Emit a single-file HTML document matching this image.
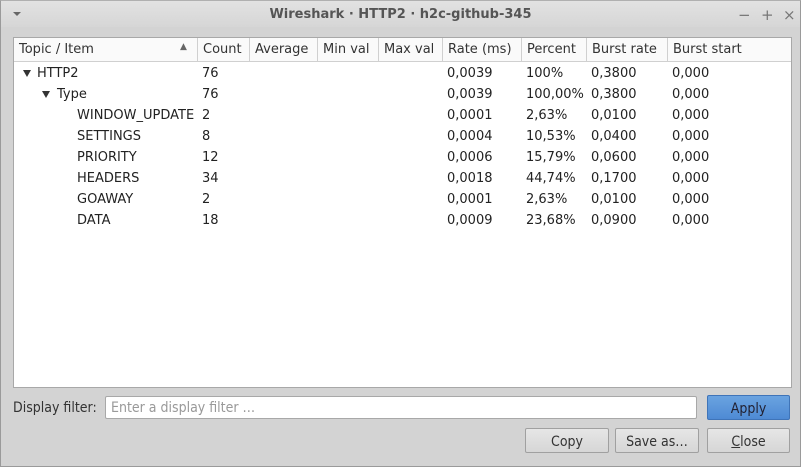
<!DOCTYPE html>
<html><head><meta charset="utf-8">
<style>
*{margin:0;padding:0;box-sizing:border-box}
body{width:801px;height:467px;overflow:hidden;background:#d3d3d3;font-family:"DejaVu Sans","Liberation Sans",sans-serif;font-size:13px;color:#222;position:relative}
.win{position:absolute;left:0;top:0;width:801px;height:467px;border:1px solid #9a9a9a;border-top-color:#b0b0b0}
.title{position:absolute;left:1px;top:1px;width:799px;height:26px;background:linear-gradient(#e2e2e2,#d6d6d6)}
.title .t{position:absolute;left:0;width:100%;top:6px;text-align:center;font-weight:bold;font-size:13px;color:#555}
.tri{position:absolute;left:12px;top:11px;width:0;height:0;border-left:4px solid transparent;border-right:4px solid transparent;border-top:4px solid #666}
.ctl{position:absolute;top:5px;font-size:15px;color:#777}
.tree{position:absolute;left:13px;top:37px;width:779px;height:351px;background:#fff;border:1px solid #a8a8a8}
.hdr{position:absolute;left:0;top:0;width:100%;height:24px;background:#fafafa;border-bottom:1px solid #d0d0d0}
.hc{position:absolute;top:0;height:23px;border-right:1px solid #d0d0d0;padding:4px 0 0 5px;color:#333}
.row{position:absolute;left:0;width:100%;height:21px}
.c{position:absolute;top:3px;color:#222}
.ex{position:absolute;top:7px;width:0;height:0;border-left:4px solid transparent;border-right:4px solid transparent;border-top:7px solid #333}
.cond{font-family:"DejaVu Sans Condensed","DejaVu Sans","Liberation Sans",sans-serif;font-size:14px}
.lbl{position:absolute;left:13px;top:400px;color:#333}
.inp{position:absolute;left:105px;top:396px;width:592px;height:23px;background:#fff;border:1px solid #a8a8a8;border-radius:2px;padding:3px 0 0 5px;color:#999}
.btn{position:absolute;height:25px;border:1px solid #a0a0a0;border-radius:2px;background:linear-gradient(#e6e6e6,#d6d6d6);text-align:center;padding-top:5px;color:#333}
.apply{background:linear-gradient(#6aa3e0,#4e8ad4);border-color:#3f74b8;color:#223}
</style></head><body>
<div class="win"></div>
<div class="title"><div class="tri"></div><div class="t">Wireshark · HTTP2 · h2c-github-345</div>
<div class="ctl" style="left:737px">−</div><div class="ctl" style="left:760px">+</div><div class="ctl" style="left:782px">×</div></div>
<div class="tree">
<div class="hdr">
<div class="hc" style="left:0;width:184px">Topic / Item<span style="position:absolute;left:166px;top:4px;font-size:9px;color:#666">▲</span></div>
<div class="hc" style="left:184px;width:52px">Count</div>
<div class="hc" style="left:236px;width:68px">Average</div>
<div class="hc" style="left:304px;width:61px">Min val</div>
<div class="hc" style="left:365px;width:64px">Max val</div>
<div class="hc" style="left:429px;width:79px">Rate (ms)</div>
<div class="hc" style="left:508px;width:65px">Percent</div>
<div class="hc" style="left:573px;width:81px">Burst rate</div>
<div class="hc" style="left:654px;width:124px;border-right:none">Burst start</div>
</div>
<div class="row" style="top:25px"><div class="ex" style="left:9px"></div><span class="c" style="left:23px">HTTP2</span><span class="c" style="left:188px">76</span><span class="c" style="left:433px">0,0039</span><span class="c" style="left:512px">100%</span><span class="c" style="left:577px">0,3800</span><span class="c" style="left:658px">0,000</span></div>
<div class="row" style="top:46px"><div class="ex" style="left:28px"></div><span class="c" style="left:43px">Type</span><span class="c" style="left:188px">76</span><span class="c" style="left:433px">0,0039</span><span class="c" style="left:512px">100,00%</span><span class="c" style="left:577px">0,3800</span><span class="c" style="left:658px">0,000</span></div>
<div class="row" style="top:67px"><span class="c" style="left:63px">WINDOW_UPDATE</span><span class="c" style="left:188px">2</span><span class="c" style="left:433px">0,0001</span><span class="c" style="left:512px">2,63%</span><span class="c" style="left:577px">0,0100</span><span class="c" style="left:658px">0,000</span></div>
<div class="row" style="top:88px"><span class="c" style="left:63px">SETTINGS</span><span class="c" style="left:188px">8</span><span class="c" style="left:433px">0,0004</span><span class="c" style="left:512px">10,53%</span><span class="c" style="left:577px">0,0400</span><span class="c" style="left:658px">0,000</span></div>
<div class="row" style="top:109px"><span class="c" style="left:63px">PRIORITY</span><span class="c" style="left:188px">12</span><span class="c" style="left:433px">0,0006</span><span class="c" style="left:512px">15,79%</span><span class="c" style="left:577px">0,0600</span><span class="c" style="left:658px">0,000</span></div>
<div class="row" style="top:130px"><span class="c" style="left:63px">HEADERS</span><span class="c" style="left:188px">34</span><span class="c" style="left:433px">0,0018</span><span class="c" style="left:512px">44,74%</span><span class="c" style="left:577px">0,1700</span><span class="c" style="left:658px">0,000</span></div>
<div class="row" style="top:151px"><span class="c" style="left:63px">GOAWAY</span><span class="c" style="left:188px">2</span><span class="c" style="left:433px">0,0001</span><span class="c" style="left:512px">2,63%</span><span class="c" style="left:577px">0,0100</span><span class="c" style="left:658px">0,000</span></div>
<div class="row" style="top:172px"><span class="c" style="left:63px">DATA</span><span class="c" style="left:188px">18</span><span class="c" style="left:433px">0,0009</span><span class="c" style="left:512px">23,68%</span><span class="c" style="left:577px">0,0900</span><span class="c" style="left:658px">0,000</span></div>
</div>
<div class="lbl cond">Display filter:</div>
<div class="inp cond">Enter a display filter …</div>
<div class="btn apply cond" style="left:707px;top:395px;width:83px">Apply</div>
<div class="btn cond" style="left:525px;top:428px;width:84px">Copy</div>
<div class="btn cond" style="left:615px;top:428px;width:84px">Save as…</div>
<div class="btn cond" style="left:707px;top:428px;width:83px"><u>C</u>lose</div>
</body></html>
